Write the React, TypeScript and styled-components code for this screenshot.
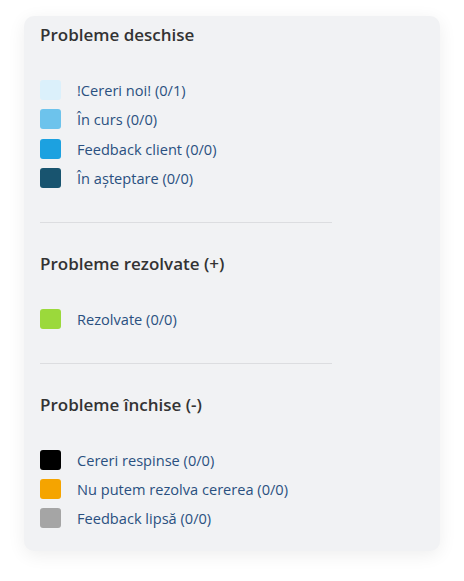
import styled, { createGlobalStyle } from "styled-components"

const GlobalStyle = createGlobalStyle`
  html, body {
    margin: 0;
    padding: 0;
    background: #ffffff;
    font-family: "Open Sans", "Liberation Sans", sans-serif;
  }
`

const Page = styled.div`
  padding: 16px 24px 31px 24px;
`

const Card = styled.div`
  width: 416px;
  box-sizing: border-box;
  background: #f1f2f4;
  border-radius: 10px;
  padding: 7px 16px 23px 16px;
  box-shadow: 0 4px 18px rgba(0, 0, 0, 0.07);
`

const Section = styled.section``

const Heading = styled.h3`
  margin: 0 0 33px 0;
  font-size: 17px;
  line-height: 24px;
  font-weight: 600;
  color: #333333;
`

const List = styled.ul`
  list-style: none;
  margin: 0;
  padding: 0;
  display: flex;
  flex-direction: column;
  gap: 9.3px;
`

const Item = styled.li`
  display: flex;
  align-items: center;
  gap: 16px;
  height: 20px;
`

const Swatch = styled.span<{ $color: string }>`
  width: 21px;
  height: 20px;
  border-radius: 3px;
  background: ${(p) => p.$color};
  flex-shrink: 0;
`

const Label = styled.span`
  font-size: 14.6px;
  color: #2a5080;
`

const Divider = styled.hr`
  width: 292px;
  margin: 34.5px 0 28.5px 0;
  border: none;
  border-top: 1px solid #dcdde0;
`

interface Status {
  color: string
  label: string
}

interface Group {
  title: string
  items: Status[]
}

const groups: Group[] = [
  {
    title: "Probleme deschise",
    items: [
      { color: "#dbf0fb", label: "!Cereri noi! (0/1)" },
      { color: "#6dc3ec", label: "În curs (0/0)" },
      { color: "#1ca1e0", label: "Feedback client (0/0)" },
      { color: "#18546f", label: "În așteptare (0/0)" },
    ],
  },
  {
    title: "Probleme rezolvate (+)",
    items: [{ color: "#9bd93b", label: "Rezolvate (0/0)" }],
  },
  {
    title: "Probleme închise (-)",
    items: [
      { color: "#000000", label: "Cereri respinse (0/0)" },
      { color: "#f5a400", label: "Nu putem rezolva cererea (0/0)" },
      { color: "#a5a5a5", label: "Feedback lipsă (0/0)" },
    ],
  },
]

export default function App() {
  return (
    <>
      <GlobalStyle />
      <Page>
        <Card>
          {groups.map((g, i) => (
            <Section key={g.title}>
              {i > 0 && <Divider />}
              <Heading>{g.title}</Heading>
              <List>
                {g.items.map((it) => (
                  <Item key={it.label}>
                    <Swatch $color={it.color} />
                    <Label>{it.label}</Label>
                  </Item>
                ))}
              </List>
            </Section>
          ))}
        </Card>
      </Page>
    </>
  )
}
